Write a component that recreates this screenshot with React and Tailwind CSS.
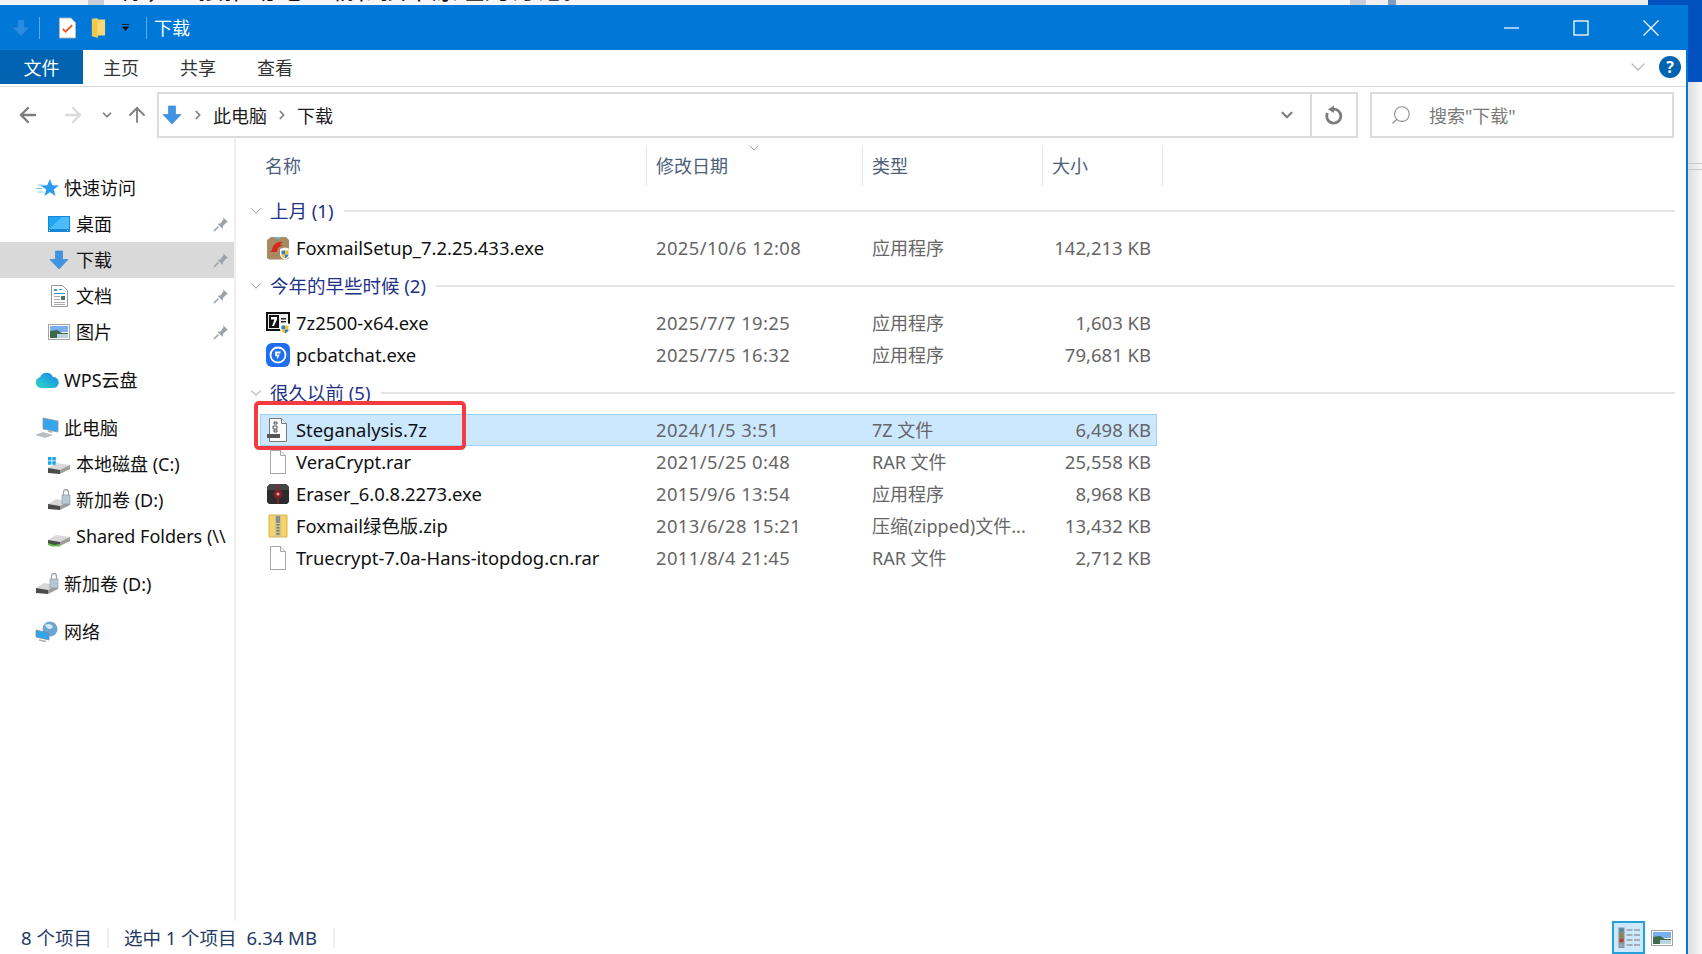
import React from "react";
import { ArrowLeft, ArrowRight, ArrowUp, ChevronDown, ChevronRight, Search } from "lucide-react";

const font = { fontFamily: '"Noto Sans", "Noto Sans CJK SC", sans-serif' };

/* ------------------ Icons ------------------ */
function BlueArrow({ className = "w-[20px] h-[20px]" }) {
  return (
    <svg viewBox="0 0 20 20" className={className}>
      <path d="M6.5 1h7v8.5H19L10 19 1 9.5h5.5z" fill="#3f94e4" stroke="#2f7fd0" strokeWidth="0.6" />
    </svg>
  );
}

function Pin() {
  return (
    <svg viewBox="0 0 16 16" className="w-[16px] h-[16px]">
      <path d="M10 1l5 5-1.5 .6-3.500 3.400-.4 3-5.200-5.200 3-.4L10.600 2.900z" fill="#9aa3ab" />
      <path d="M5.500 10.500L1 15" stroke="#9aa3ab" strokeWidth="1.600" />
    </svg>
  );
}

function BlankFile() {
  return (
    <svg viewBox="0 0 20 24" className="w-[20px] h-[24px]">
      <path d="M2.500 .5h10l5 5v18h-15z" fill="#fff" stroke="#a8a8a8" />
      <path d="M12.500 .5v5h5" fill="#f0f0f0" stroke="#a8a8a8" />
    </svg>
  );
}

function Shield() {
  return (
    <g>
      <path d="M14 13l5-1.500 5 1.500v5c0 3-2.500 4.500-5 6-2.500-1.500-5-3-5-6z" fill="#fff" />
      <path d="M15.500 14.500H19v4h-3.500z" fill="#2f7fd0" />
      <path d="M19 14.500h3.500v4H19z" fill="#f3c01e" />
      <path d="M15.500 18.500H19v4c-1.500-.7-3.500-2-3.500-4z" fill="#f3c01e" />
      <path d="M19 18.500h3.500c0 2-2 3.300-3.500 4z" fill="#2f7fd0" />
    </g>
  );
}

function FoxmailIcon() {
  return (
    <svg viewBox="0 0 24 24" className="w-[24px] h-[24px]">
      <path d="M1 4L5 1h15l3 3v18l-2 1.500H3L1 22z" fill="#a58a63" />
      <path d="M7 1l5 2 4-2z" fill="#6fc4c7" />
      <path d="M17 6c-5-1-10 2-11 8l-2 2h7c0-4 2-6 6-6l-3-1.500z" fill="#d8281e" />
      <Shield />
    </svg>
  );
}

function SevenZipExe() {
  return (
    <svg viewBox="0 0 24 24" className="w-[24px] h-[24px]">
      <path d="M0 1h24v19H0z" fill="#111" />
      <path d="M2 3h20v15H2z" fill="#eee" />
      <path d="M3 4h10v13H3z" fill="#111" />
      <path d="M5 6h6v2.500L8 15H6l2.500-6.500H5z" fill="#fff" />
      <path d="M15 7h5v1.500h-5zM15 10h5v1.500h-5z" fill="#222" />
      <Shield />
    </svg>
  );
}

function PcBatIcon() {
  return (
    <svg viewBox="0 0 24 24" className="w-[24px] h-[24px]">
      <rect x="0" y="0" width="24" height="24" rx="6" fill="#1f6ef0" />
      <circle cx="12" cy="12" r="7.500" fill="none" stroke="#fff" strokeWidth="1.800" />
      <path d="M9 8.500h6l-1 2h-3l-.2 1h3l-2 4h-1.300l1-2.200H9.300z" fill="#fff" />
    </svg>
  );
}

function ArchiveIcon() {
  return (
    <svg viewBox="0 0 24 24" className="w-[24px] h-[24px]">
      <path d="M3.500 .5h12l5 5v18h-17z" fill="#fbfbfb" stroke="#7a7a7a" />
      <path d="M15.500 .5v5h5" fill="#ececec" stroke="#7a7a7a" />
      <path d="M8 4h3v2H8zM7 8h4v3H7zM8 12h3v2H8z" fill="none" stroke="#555" />
      <path d="M1 16h13v4H1z" fill="#555" />
    </svg>
  );
}

function EraserIcon() {
  return (
    <svg viewBox="0 0 24 24" className="w-[24px] h-[24px]">
      <path d="M1 5l3-3h16l3 3v15l-2 2H3l-2-2z" fill="#2c2c2e" />
      <path d="M1 5l3-3h16l3 3v3H1z" fill="#454548" />
      <path d="M11.300 2h1.400v20h-1.400z" fill="#a3202a" />
      <circle cx="12" cy="12" r="4.500" fill="#7c1f28" />
      <circle cx="12" cy="12" r="1.600" fill="#e6a0a0" />
    </svg>
  );
}

function ZipIcon() {
  return (
    <svg viewBox="0 0 24 24" className="w-[24px] h-[24px]">
      <path d="M3 1h18v22H3z" fill="#f6d365" stroke="#d9b44a" />
      <path d="M9 1h6v22H9z" fill="#c8c39a" />
      <path d="M10 2h4v7h-4z" fill="#8d8d8d" />
      <path d="M10.500 10h3v1.500h-3zM10.500 13h3v1.500h-3zM10.500 16h3v1.500h-3zM10.500 19h3v1.500h-3z" fill="#77755a" />
    </svg>
  );
}

function StarIcon() {
  return (
    <svg viewBox="0 0 23 18" className="w-[23px] h-[18px]">
      <path d="M14 0l2.300 6.300 6.700.2-5.300 4.100 1.900 6.400-5.600-3.800-5.600 3.800 1.900-6.400L4.500 6.500l6.700-.2z" fill="#2a9df0" />
      <path d="M2 6h5M0 9.500h6M2 13h5" stroke="#7cc7f5" strokeWidth="1.200" />
    </svg>
  );
}

function DesktopIcon() {
  return (
    <svg viewBox="0 0 22 16" className="w-[22px] h-[16px]">
      <rect width="22" height="16" fill="#1787d8" />
      <path d="M1 1h20v12H1z" fill="#22a5f5" />
      <path d="M1 13L14 1h7v12z" fill="#4cbcf8" />
      <path d="M1 14h1v1H1zM19 14h1v1h-1z" fill="#fff" />
    </svg>
  );
}

function DocIcon() {
  return (
    <svg viewBox="0 0 17 22" className="w-[17px] h-[22px]">
      <path d="M.5 .5h11l5 5v16H.5z" fill="#fff" stroke="#9a9a9a" />
      <path d="M3 4h3v2H3zM8 4h3v1H8zM3 8h11v1H3z" fill="#3d95d8" />
      <path d="M3 11h6v1H3zM3 14h6v1H3zM3 17h11v1H3zM3 19h11v1H3z" fill="#a9a9a9" />
      <path d="M10 11h4v4h-4z" fill="#49745e" />
    </svg>
  );
}

function PictureIcon({ className = "w-[22px] h-[16px]" }) {
  return (
    <svg viewBox="0 0 22 16" className={className}>
      <rect x=".5" y=".5" width="21" height="15" fill="#fff" stroke="#a3a3a3" />
      <path d="M2 2h18v6H2z" fill="#79aef0" />
      <path d="M2 7l7-1 5 3 6 0v5H2z" fill="#3d6b4c" />
      <path d="M9 10h11v4H9z" fill="#b9d4dc" />
    </svg>
  );
}

function CloudIcon() {
  return (
    <svg viewBox="0 0 24 18" className="w-[24px] h-[18px]">
      <defs>
        <linearGradient id="wps" x1="0" y1="1" x2="1" y2="0">
          <stop offset="0" stopColor="#2fd8c0" />
          <stop offset="1" stopColor="#1683f0" />
        </linearGradient>
      </defs>
      <path d="M6 17A5.500 5.500 0 0 1 5 6.200 7 7 0 0 1 18 6a5.500 5.500 0 0 1 .5 11z" fill="url(#wps)" />
    </svg>
  );
}

function PcIcon() {
  return (
    <svg viewBox="0 0 24 22" className="w-[24px] h-[22px]">
      <path d="M8 1l15 3v11L8 12z" fill="#37a4ec" stroke="#8a9aa6" strokeWidth="0.800" />
      <path d="M13 13l4 1v2l-4-1z" fill="#b2b8bd" />
      <path d="M0 18l8-3 10 3-8 3z" fill="#b9bec3" />
    </svg>
  );
}

function DriveIcon({ children }) {
  return (
    <svg viewBox="0 0 24 22" className="w-[24px] h-[22px]">
      <path d="M1 15l8-5 14 2-1 1-9 6-12-1z" fill="#d8d8d8" />
      <path d="M1 15l12 2v4L1 20z" fill="#4c4c4c" />
      <path d="M13 17l10-5v4l-10 5z" fill="#9d9d9d" />
      {children}
    </svg>
  );
}

function WinDrive() {
  return (
    <DriveIcon>
      <path d="M1 4h3.500v3.500H1zM5.300 4h3.500v3.500H5.300zM1 8.300h3.500v3.500H1zM5.300 8.300h3.500v3.500H5.300z" fill="#19a7ea" />
    </DriveIcon>
  );
}

function LockDrive() {
  return (
    <DriveIcon>
      <rect x="15" y="6" width="8" height="9" fill="#b7c7d6" stroke="#86939e" strokeWidth="0.600" />
      <path d="M16.500 6V3a2.500 2.500 0 0 1 5 0v3" fill="none" stroke="#9aa5ae" strokeWidth="1.300" />
    </DriveIcon>
  );
}

function NetDrive() {
  return (
    <DriveIcon>
      <path d="M1 18l6 2 6-1v2.500L5 21.500 1 20z" fill="#5cc04a" />
    </DriveIcon>
  );
}

function NetworkIcon() {
  return (
    <svg viewBox="0 0 24 22" className="w-[24px] h-[22px]">
      <circle cx="15" cy="8" r="7.500" fill="#6ba6d2" />
      <path d="M10 4c3-2 7-1 8 2-2 3-6 3-8-2z" fill="#d6e6f2" />
      <path d="M1 9l13 3v7L1 16z" fill="#33a5ee" stroke="#7b8a96" strokeWidth="0.700" />
      <path d="M4 19l7 1.500" stroke="#a8b0b6" strokeWidth="1.500" />
    </svg>
  );
}

function RefreshIcon() {
  return (
    <svg viewBox="0 0 20 20" className="w-[20px] h-[20px]">
      <path d="M3.500 8a7 7 0 1 0 5-3.800" fill="none" stroke="#7d7d7d" strokeWidth="2.800" />
      <path d="M4 4.200L10 .5v7.500z" fill="#7d7d7d" />
    </svg>
  );
}

function DetailsIcon() {
  const rows = [
    ["#4d8a9c", 2],
    ["#8a8a3c", 7],
    ["#b5432c", 12],
    ["#8fa8b8", 17],
  ];
  return (
    <svg viewBox="0 0 22 22" className="w-[22px] h-[22px]">
      {rows.map(([color, y]) => (
        <g key={y}>
          <rect x="1" y={y - 1} width="5" height="4.500" fill={color} stroke="#8c8c8c" />
          <path d={`M8.500 ${y + 1}h6M16 ${y + 1}h6`} stroke="#777" strokeWidth="1.200" />
        </g>
      ))}
    </svg>
  );
}

/* ------------------ Data ------------------ */
const navItems = [
  { label: "快速访问", icon: <StarIcon />, top: true },
  { label: "桌面", icon: <DesktopIcon />, pin: true },
  { label: "下载", icon: <BlueArrow />, pin: true, active: true },
  { label: "文档", icon: <DocIcon />, pin: true },
  { label: "图片", icon: <PictureIcon />, pin: true },
  { label: "WPS云盘", icon: <CloudIcon />, top: true, gap: true },
  { label: "此电脑", icon: <PcIcon />, top: true, gap: true },
  { label: "本地磁盘 (C:)", icon: <WinDrive /> },
  { label: "新加卷 (D:)", icon: <LockDrive /> },
  { label: "Shared Folders (\\\\", icon: <NetDrive /> },
  { label: "新加卷 (D:)", icon: <LockDrive />, top: true, gap: true },
  { label: "网络", icon: <NetworkIcon />, top: true, gap: true },
];

const groups = [
  {
    title: "上月 (1)",
    files: [
      { name: "FoxmailSetup_7.2.25.433.exe", date: "2025/10/6 12:08", type: "应用程序", size: "142,213 KB", icon: <FoxmailIcon /> },
    ],
  },
  {
    title: "今年的早些时候 (2)",
    files: [
      { name: "7z2500-x64.exe", date: "2025/7/7 19:25", type: "应用程序", size: "1,603 KB", icon: <SevenZipExe /> },
      { name: "pcbatchat.exe", date: "2025/7/5 16:32", type: "应用程序", size: "79,681 KB", icon: <PcBatIcon /> },
    ],
  },
  {
    title: "很久以前 (5)",
    files: [
      { name: "Steganalysis.7z", date: "2024/1/5 3:51", type: "7Z 文件", size: "6,498 KB", icon: <ArchiveIcon />, selected: true },
      { name: "VeraCrypt.rar", date: "2021/5/25 0:48", type: "RAR 文件", size: "25,558 KB", icon: <BlankFile /> },
      { name: "Eraser_6.0.8.2273.exe", date: "2015/9/6 13:54", type: "应用程序", size: "8,968 KB", icon: <EraserIcon /> },
      { name: "Foxmail绿色版.zip", date: "2013/6/28 15:21", type: "压缩(zipped)文件...", size: "13,432 KB", icon: <ZipIcon /> },
      { name: "Truecrypt-7.0a-Hans-itopdog.cn.rar", date: "2011/8/4 21:45", type: "RAR 文件", size: "2,712 KB", icon: <BlankFile /> },
    ],
  },
];

/* ------------------ Parts ------------------ */
function TopStrip() {
  // what shows of the windows behind this one
  return (
    <div className="h-[5px] shrink-0 flex overflow-hidden">
      <div className="w-[88px] bg-[#f4f4f4]" />
      <div className="w-[16px] bg-[#c9ced8]" />
      <div className="w-[1246px] bg-[#f6f6f6] overflow-hidden whitespace-nowrap">
        <div className="-mt-[26px] ml-[16px] text-[26px] leading-[30px] text-[#111]">你，直接推动电上载和技术原理的讨论。</div>
      </div>
      <div className="w-[16px] bg-[#c9ced8]" />
      <div className="w-[22px] bg-[#f0f0f0]" />
      <div className="w-[8px] bg-[#7f9cc4]" />
      <div className="w-[252px] bg-[#ececec]" />
      <div className="flex-1 bg-[#0050c0]" />
    </div>
  );
}

function TitleBar() {
  return (
    <div className="h-[45px] shrink-0 bg-[#0078d7] flex items-center text-white">
      <div className="w-[39px] flex justify-end pr-[9px] opacity-70">
        <BlueArrow className="w-[18px] h-[18px]" />
      </div>
      <div className="w-px h-[22px] bg-[#5fa8e6]" />
      <div className="w-[19px]" />
      <svg viewBox="0 0 18 22" className="w-[17px] h-[22px]">
        <path d="M.5 .5h12l5 5v16H.5z" fill="#fff" stroke="#bbb" />
        <path d="M4 12l3 3 7-7" fill="none" stroke="#e8592a" strokeWidth="2" />
      </svg>
      <div className="w-[15px]" />
      <svg viewBox="0 0 16 22" className="w-[15px] h-[22px]">
        <path d="M1 1l6-.5V2h8v17H7v2.500l-6-2z" fill="#f9d878" />
        <path d="M1 1l6 2v18.500l-6-2z" fill="#f5c748" />
      </svg>
      <div className="w-[15px]" />
      <svg viewBox="0 0 10 10" className="w-[9px] h-[9px]">
        <path d="M1 1h8v1H1zM1 4h8L5 9z" fill="#111" />
      </svg>
      <div className="w-[16px]" />
      <div className="w-px h-[22px] bg-[#5fa8e6]" />
      <span className="ml-[7px] text-[18px] leading-none">下载</span>
      <div className="ml-auto flex items-center pr-[27px]">
        <svg viewBox="0 0 16 16" className="w-[16px] h-[16px] mr-[53px]">
          <path d="M0 8h15" stroke="#fff" strokeWidth="1.200" />
        </svg>
        <svg viewBox="0 0 16 16" className="w-[16px] h-[16px] mr-[54px]">
          <rect x="1" y="1" width="14" height="14" fill="none" stroke="#fff" strokeWidth="1.300" />
        </svg>
        <svg viewBox="0 0 16 16" className="w-[16px] h-[16px]">
          <path d="M.5 .5l15 15M15.500 .5l-15 15" stroke="#fff" strokeWidth="1.200" />
        </svg>
      </div>
    </div>
  );
}

function RibbonTabs() {
  return (
    <div className="h-[37px] shrink-0 border-b border-[#dadada] flex items-stretch text-[18px] text-[#333]">
      <div className="w-[83px] h-[34px] pt-[2px] bg-[#0063b1] text-white flex items-center justify-center">文件</div>
      <div className="h-[34px] pt-[2px] flex items-center ml-[20px] gap-[41px]">
        <span>主页</span>
        <span>共享</span>
        <span>查看</span>
      </div>
      <div className="ml-auto h-[34px] flex items-center pr-[5px]">
        <ChevronDown className="w-[24px] h-[24px] text-[#b5b5b5] mr-[9px]" strokeWidth={1.2} />
        <div className="w-[22px] h-[22px] rounded-full bg-[#0063b1] text-white flex items-center justify-center text-[16px] font-bold">?</div>
      </div>
    </div>
  );
}

function AddressBar() {
  return (
    <div className="h-[46px] mt-[5px] shrink-0 flex items-stretch">
      <div className="w-[157px] flex items-center text-[#7d7d7d]">
        <ArrowLeft className="w-[24px] h-[24px] ml-[16px]" strokeWidth={2.4} />
        <ArrowRight className="w-[24px] h-[24px] ml-[21px] text-[#dcdcdc]" strokeWidth={2.4} />
        <ChevronDown className="w-[14px] h-[14px] ml-[15px]" strokeWidth={3} />
        <ArrowUp className="w-[24px] h-[24px] ml-[11px]" strokeWidth={1.8} />
      </div>
      <div className="w-[1201px] border-2 border-[#dcdcdc] flex items-center text-[18px] text-[#1a1a1a]">
        <div className="ml-[3px]">
          <BlueArrow />
        </div>
        <ChevronRight className="w-[14px] h-[14px] ml-[9px] text-[#7d7d7d]" strokeWidth={3} />
        <span className="ml-[8px] pt-[2px]">此电脑</span>
        <ChevronRight className="w-[14px] h-[14px] ml-[8px] text-[#7d7d7d]" strokeWidth={3} />
        <span className="ml-[8px] pt-[2px]">下载</span>
        <ChevronDown className="w-[18px] h-[18px] ml-auto mr-[14px] text-[#7d7d7d]" strokeWidth={3} />
        <div className="w-[46px] h-full border-l-2 border-[#dcdcdc] flex items-center justify-center">
          <RefreshIcon />
        </div>
      </div>
      <div className="w-[304px] ml-[12px] border-2 border-[#dcdcdc] flex items-center text-[18px] text-[#7a7a7a]">
        <Search className="w-[22px] h-[22px] ml-[18px] text-[#8c8c8c] -scale-x-100" strokeWidth={1.2} />
        <span className="ml-[17px] pt-[2px]">搜索"下载"</span>
      </div>
    </div>
  );
}

function Sidebar() {
  return (
    <div className="w-[236px] shrink-0 border-r-2 border-[#f0f0f0] pt-[32px] overflow-hidden">
      {navItems.map((item, i) => (
        <div
          key={i}
          className={`h-[36px] w-[234px] flex items-center text-[18px] text-[#111] whitespace-nowrap overflow-hidden ${item.gap ? "mt-[12px]" : ""} ${item.active ? "bg-[#d9d9d9]" : ""}`}
        >
          <div className={`shrink-0 flex justify-center w-[24px] mr-[5px] ${item.top ? "ml-[35px]" : "ml-[47px]"}`}>
            {item.icon}
          </div>
          <span className="flex-1 overflow-hidden">{item.label}</span>
          {item.pin && (
            <div className="shrink-0 mr-[5px]">
              <Pin />
            </div>
          )}
        </div>
      ))}
    </div>
  );
}

function HeaderCell({ label, className }) {
  return (
    <div className={`h-[40px] pt-[1px] flex items-center border-r border-[#e5e5e5] ${className}`}>{label}</div>
  );
}

function FileRow({ file }) {
  return (
    <div
      className={`h-[32px] w-[897px] ml-[24px] flex items-center text-[18.4px] whitespace-nowrap border ${file.selected ? "bg-[#cce8ff] border-[#99d1ff]" : "border-transparent"}`}
    >
      <div className="w-[395px] flex items-center text-[#111]">
        <div className="w-[24px] ml-[5px] mr-[6px] flex justify-center">{file.icon}</div>
        <span>{file.name}</span>
      </div>
      <span className="w-[216px] text-[#666] tracking-[0.4px]">{file.date}</span>
      <span className="w-[180px] text-[#666] overflow-hidden text-[18px]">{file.type}</span>
      <span className="w-[99px] text-right text-[#666] text-[18.5px]">{file.size}</span>
    </div>
  );
}

function FileList() {
  return (
    <div className="flex-1 relative min-w-0">
      <div className="flex h-[40px] mt-[8px] text-[18px] text-[#4c607a] relative">
        <HeaderCell label="名称" className="w-[411px] pl-[29px]" />
        <HeaderCell label="修改日期" className="w-[216px] pl-[9px]" />
        <HeaderCell label="类型" className="w-[180px] pl-[9px]" />
        <HeaderCell label="大小" className="w-[120px] pl-[9px]" />
        <ChevronDown className="absolute left-[510px] -top-[6px] w-[16px] h-[16px] text-[#888]" strokeWidth={1.2} />
      </div>
      <div className="pt-[3px]">
        {groups.map((group) => (
          <div key={group.title}>
            <div className="h-[32px] mt-[6px] mb-[5px] flex items-center text-[18.5px] text-[#1e3287] whitespace-nowrap">
              <ChevronDown className="w-[18px] h-[18px] ml-[11px] text-[#888]" strokeWidth={1.2} />
              <span className="ml-[5px]">{group.title}</span>
              <div className="flex-1 h-[2px] bg-[#e5e5e5] ml-[10px] mr-[11px]" />
            </div>
            {group.files.map((file) => (
              <FileRow key={file.name} file={file} />
            ))}
          </div>
        ))}
      </div>
      {/* the red box drawn on top of the screenshot */}
      <div className="absolute left-[18px] top-[263px] w-[212px] h-[49px] border-[4px] border-[#f43b3f] rounded-[5px]" />
    </div>
  );
}

function StatusBar() {
  return (
    <div className="h-[33px] shrink-0 flex items-center text-[18.5px] text-[#1f3a63]">
      <span className="ml-[21px]">8 个项目</span>
      <div className="w-[2px] h-[20px] bg-[#f0f0f0] ml-[15px]" />
      <span className="ml-[15px]">选中 1 个项目</span>
      <span className="ml-[10px]">6.34 MB</span>
      <div className="w-[2px] h-[20px] bg-[#f0f0f0] ml-[16px]" />
      <div className="ml-auto flex items-center h-full pr-[13px]">
        <div className="w-[33px] h-[33px] bg-[#cce8ff] border-2 border-[#26a0da] flex items-center justify-center mr-[6px]">
          <DetailsIcon />
        </div>
        <PictureIcon />
      </div>
    </div>
  );
}

/* ------------------ Page ------------------ */
export default function App() {
  return (
    <div className="w-[1702px] h-[954px] overflow-hidden bg-[#f2f2f2] flex flex-col" style={font}>
      <TopStrip />
      <div className="flex-1 flex min-h-0">
        <div className="w-[1688px] shrink-0 bg-white border-r-2 border-[#0078d7] flex flex-col">
          <TitleBar />
          <RibbonTabs />
          <AddressBar />
          <div className="flex-1 flex min-h-0">
            <Sidebar />
            <FileList />
          </div>
          <StatusBar />
        </div>
        <div className="flex-1 flex flex-col bg-gradient-to-r from-[#dedede] to-[#f8f8f8]">
          <div className="h-[77px] bg-[#0050c0]" />
          <div className="h-[81px]" />
          <div className="h-[1px] bg-[#c8c8c8]" />
          <div className="h-[5px]" />
          <div className="h-[1px] bg-[#c8c8c8]" />
        </div>
      </div>
    </div>
  );
}
